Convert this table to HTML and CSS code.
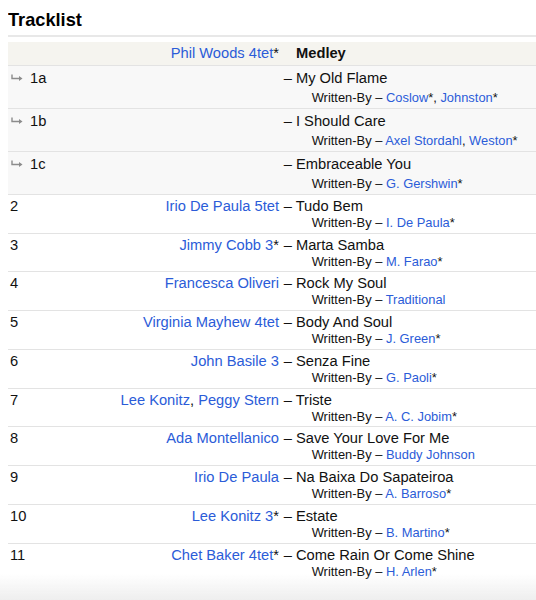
FILE: index.html
```html
<!DOCTYPE html>
<html>

<head>
    <meta charset="UTF-8">
    <title>Tracklist</title>
    <link rel="stylesheet" href="styles.css">
</head>

<body>
    <div class="section">
        <h2 class="section_title">Tracklist</h2>
        <table class="tracklist">
            <colgroup>
                <col class="col_pos">
                <col class="col_artist">
                <col>
            </colgroup>
            <!--组曲标题-->
            <tr class="index_track">
                <td class="pos"></td>
                <td class="artist"><a href="#">Phil Woods 4tet</a>*</td>
                <td class="title"><div class="track_title">Medley</div></td>
            </tr>
            <tr class="subtrack">
                <td class="pos"><svg class="sub_arrow" width="12" height="7" viewBox="0 0 12 7"><path d="M1 0.5V4.5H9.5" fill="none" stroke="#8c8c8c" stroke-width="1.4"/><path d="M8 2L11.5 4.5L8 7Z" fill="#8c8c8c"/></svg>1a</td>
                <td class="artist"></td>
                <td class="title">
                    <div class="track_title">– My Old Flame</div>
                    <div class="credits">Written-By – <a href="#">Coslow</a>*, <a href="#">Johnston</a>*</div>
                </td>
            </tr>
            <tr class="subtrack">
                <td class="pos"><svg class="sub_arrow" width="12" height="7" viewBox="0 0 12 7"><path d="M1 0.5V4.5H9.5" fill="none" stroke="#8c8c8c" stroke-width="1.4"/><path d="M8 2L11.5 4.5L8 7Z" fill="#8c8c8c"/></svg>1b</td>
                <td class="artist"></td>
                <td class="title">
                    <div class="track_title">– I Should Care</div>
                    <div class="credits">Written-By – <a href="#">Axel Stordahl</a>, <a href="#">Weston</a>*</div>
                </td>
            </tr>
            <tr class="subtrack">
                <td class="pos"><svg class="sub_arrow" width="12" height="7" viewBox="0 0 12 7"><path d="M1 0.5V4.5H9.5" fill="none" stroke="#8c8c8c" stroke-width="1.4"/><path d="M8 2L11.5 4.5L8 7Z" fill="#8c8c8c"/></svg>1c</td>
                <td class="artist"></td>
                <td class="title">
                    <div class="track_title">– Embraceable You</div>
                    <div class="credits">Written-By – <a href="#">G. Gershwin</a>*</div>
                </td>
            </tr>
            <tr>
                <td class="pos">2</td>
                <td class="artist"><a href="#">Irio De Paula 5tet</a></td>
                <td class="title">
                    <div class="track_title">– Tudo Bem</div>
                    <div class="credits">Written-By – <a href="#">I. De Paula</a>*</div>
                </td>
            </tr>
            <tr>
                <td class="pos">3</td>
                <td class="artist"><a href="#">Jimmy Cobb 3</a>*</td>
                <td class="title">
                    <div class="track_title">– Marta Samba</div>
                    <div class="credits">Written-By – <a href="#">M. Farao</a>*</div>
                </td>
            </tr>
            <tr>
                <td class="pos">4</td>
                <td class="artist"><a href="#">Francesca Oliveri</a></td>
                <td class="title">
                    <div class="track_title">– Rock My Soul</div>
                    <div class="credits">Written-By – <a href="#">Traditional</a></div>
                </td>
            </tr>
            <tr>
                <td class="pos">5</td>
                <td class="artist"><a href="#">Virginia Mayhew 4tet</a></td>
                <td class="title">
                    <div class="track_title">– Body And Soul</div>
                    <div class="credits">Written-By – <a href="#">J. Green</a>*</div>
                </td>
            </tr>
            <tr>
                <td class="pos">6</td>
                <td class="artist"><a href="#">John Basile 3</a></td>
                <td class="title">
                    <div class="track_title">– Senza Fine</div>
                    <div class="credits">Written-By – <a href="#">G. Paoli</a>*</div>
                </td>
            </tr>
            <tr>
                <td class="pos">7</td>
                <td class="artist"><a href="#">Lee Konitz</a>, <a href="#">Peggy Stern</a></td>
                <td class="title">
                    <div class="track_title">– Triste</div>
                    <div class="credits">Written-By – <a href="#">A. C. Jobim</a>*</div>
                </td>
            </tr>
            <tr>
                <td class="pos">8</td>
                <td class="artist"><a href="#">Ada Montellanico</a></td>
                <td class="title">
                    <div class="track_title">– Save Your Love For Me</div>
                    <div class="credits">Written-By – <a href="#">Buddy Johnson</a></div>
                </td>
            </tr>
            <tr>
                <td class="pos">9</td>
                <td class="artist"><a href="#">Irio De Paula</a></td>
                <td class="title">
                    <div class="track_title">– Na Baixa Do Sapateiroa</div>
                    <div class="credits">Written-By – <a href="#">A. Barroso</a>*</div>
                </td>
            </tr>
            <tr>
                <td class="pos">10</td>
                <td class="artist"><a href="#">Lee Konitz 3</a>*</td>
                <td class="title">
                    <div class="track_title">– Estate</div>
                    <div class="credits">Written-By – <a href="#">B. Martino</a>*</div>
                </td>
            </tr>
            <tr class="last">
                <td class="pos">11</td>
                <td class="artist"><a href="#">Chet Baker 4tet</a>*</td>
                <td class="title">
                    <div class="track_title">– Come Rain Or Come Shine</div>
                    <div class="credits">Written-By – <a href="#">H. Arlen</a>*</div>
                </td>
            </tr>
        </table>
    </div>
    <!--底部渐隐-->
    <div class="fade"></div>
</body>

</html>
```

FILE: styles.css
```css
body {
    margin: 0 0 0 8px;
    padding-top: 8.7px;
    font-family: "Liberation Sans", Arial, sans-serif;
    color: #111;
    background-color: #FFF;
}

a {
    color: #2b5cd8;
    text-decoration: none;
}

.section_title {
    margin: 0;
    padding-bottom: 4.3px;
    font-size: 18.2px;
    line-height: 22px;
    font-weight: bold;
    color: #000;
    border-bottom: 2px solid #e8e8e8;
}

.tracklist {
    width: 100%;
    margin-top: 4.7px;
    border-collapse: collapse;
    table-layout: fixed;
    font-size: 14.7px;
}

.col_pos {
    width: 60px;
}

.col_artist {
    width: 212px;
}

.tracklist tr {
    border-bottom: 1px solid #e3e3e3;
}

.tracklist tr.last {
    border-bottom: none;
}

.tracklist td {
    padding: 2px 0 2.75px 0;
    vertical-align: top;
    line-height: 18px;
}

.tracklist .pos {
    padding-left: 2px;
    white-space: nowrap;
}

.tracklist .artist {
    text-align: right;
    padding-right: 1px;
    white-space: nowrap;
}

.tracklist .title {
    padding-left: 3.7px;
    white-space: nowrap;
}

.credits {
    padding-left: 28px;
    font-size: 12.9px;
    line-height: 15px;
}

.index_track {
    background-color: #f5f4ef;
}

.index_track td {
    padding-top: 2.5px;
    padding-bottom: 2.8px;
}

.index_track .title {
    padding-left: 16px;
    font-weight: bold;
}

.subtrack {
    background-color: #f8f8f8;
}

.subtrack td {
    padding-top: 3px;
    padding-bottom: 3px;
}

.subtrack .credits {
    margin-top: 3px;
}

.sub_arrow {
    display: inline-block;
    vertical-align: top;
    margin: 5px 7px 0 1px;
}

.fade {
    position: fixed;
    left: 0;
    right: 0;
    bottom: 0;
    height: 26px;
    background: linear-gradient(rgba(255, 255, 255, 0), #eeeeee);
}
```
